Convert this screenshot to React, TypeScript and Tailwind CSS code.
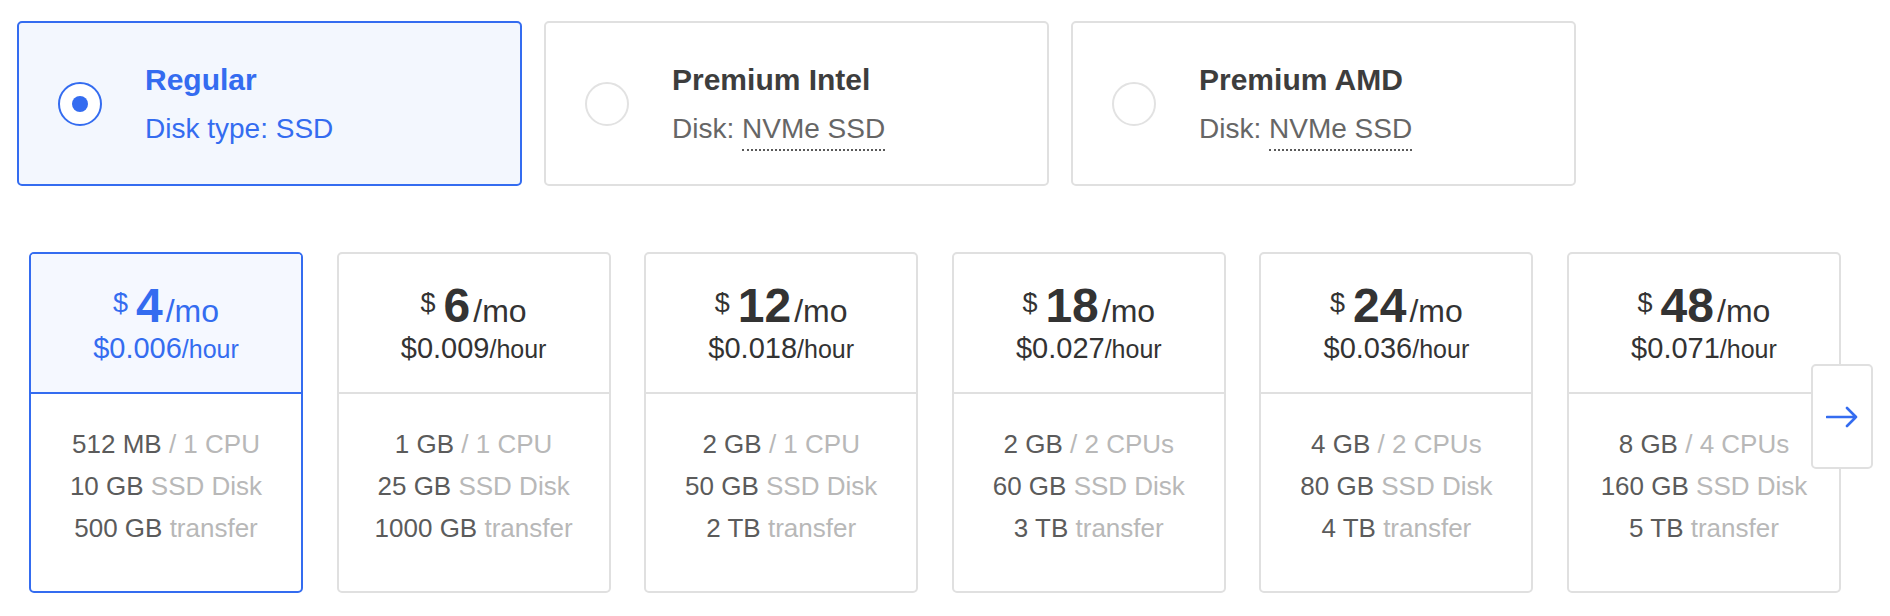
import React from 'react';

const cpuTypes = [
    { title: 'Regular', label: 'Disk type:', disk: 'SSD', selected: true },
    { title: 'Premium Intel', label: 'Disk:', disk: 'NVMe SSD', selected: false },
    { title: 'Premium AMD', label: 'Disk:', disk: 'NVMe SSD', selected: false },
];

const plans = [
    { price: '4', hour: '0.006', mem: '512 MB', cpu: '1 CPU', disk: '10 GB', transfer: '500 GB' },
    { price: '6', hour: '0.009', mem: '1 GB', cpu: '1 CPU', disk: '25 GB', transfer: '1000 GB' },
    { price: '12', hour: '0.018', mem: '2 GB', cpu: '1 CPU', disk: '50 GB', transfer: '2 TB' },
    { price: '18', hour: '0.027', mem: '2 GB', cpu: '2 CPUs', disk: '60 GB', transfer: '3 TB' },
    { price: '24', hour: '0.036', mem: '4 GB', cpu: '2 CPUs', disk: '80 GB', transfer: '4 TB' },
    { price: '48', hour: '0.071', mem: '8 GB', cpu: '4 CPUs', disk: '160 GB', transfer: '5 TB' },
];

const App: React.FC = () => (
    <div className="relative w-full h-[616px] bg-white font-['Liberation_Sans',Arial,sans-serif]">
        {/* CPU options */}
        <div className="flex gap-[22px] pt-[21px] pl-[17px]">
            {cpuTypes.map((t) => (
                <div
                    key={t.title}
                    className={
                        t.selected
                            ? 'w-[505px] h-[165px] rounded-[5px] border-2 border-[#346cf0] bg-[#f3f7fe] flex items-center pl-[39px]'
                            : 'w-[505px] h-[165px] rounded-[5px] border-2 border-[#e0e0e0] bg-white flex items-center pl-[39px]'
                    }
                >
                    {t.selected ? (
                        <div className="w-[44px] h-[44px] rounded-full border-2 border-[#346cf0] bg-white flex items-center justify-center shrink-0">
                            <div className="w-[16px] h-[16px] rounded-full bg-[#346cf0]" />
                        </div>
                    ) : (
                        <div className="w-[44px] h-[44px] rounded-full border-2 border-[#e2e2e2] bg-white shrink-0" />
                    )}
                    <div className="ml-[43px]">
                        <div className={t.selected ? 'text-[30px] font-bold leading-none text-[#346cf0]' : 'text-[30px] font-bold leading-none text-[#3d3d3d]'}>
                            {t.title}
                        </div>
                        <div className={t.selected ? 'mt-[20px] text-[28px] leading-none text-[#346cf0]' : 'mt-[20px] text-[28px] leading-none text-[#666666]'}>
                            {t.label}{' '}
                            {t.selected ? (
                                t.disk
                            ) : (
                                <span className="inline-block pb-[6px] -mb-[8px] border-b-2 border-dotted border-[#5a5a5a]">{t.disk}</span>
                            )}
                        </div>
                    </div>
                </div>
            ))}
        </div>

        {/* Plans */}
        <div className="flex gap-[33.6px] mt-[66px] pl-[29px]">
            {plans.map((p, i) => {
                const sel = i === 0;
                return (
                    <div
                        key={p.price}
                        className={
                            sel
                                ? 'w-[274px] h-[341px] rounded-[5px] border-2 border-[#346cf0] bg-white flex flex-col overflow-hidden'
                                : 'w-[274px] h-[341px] rounded-[5px] border-2 border-[#e0e0e0] bg-white flex flex-col overflow-hidden'
                        }
                    >
                        <div
                            className={
                                sel
                                    ? 'h-[140px] shrink-0 border-b-2 border-[#346cf0] bg-[#f5f8ff] pt-[28px] text-[#346cf0]'
                                    : 'h-[140px] shrink-0 border-b-2 border-[#e0e0e0] pt-[28px] text-[#333333]'
                            }
                        >
                            <div className="flex justify-center items-baseline h-[48px] leading-none">
                                <span className="self-start mt-[8px] text-[27px] leading-none mr-[8px]">$</span>
                                <span className="text-[48px] font-bold leading-none">{p.price}</span>
                                <span className="text-[32px] leading-none ml-[3px]">/mo</span>
                            </div>
                            <div className="mt-[4px] text-center leading-none">
                                <span className="text-[29px]">${p.hour}</span>
                                <span className="text-[25px]">/hour</span>
                            </div>
                        </div>
                        <div className="pt-[29px] text-center text-[26px] leading-[42px] text-[#5b5b5b]">
                            <div>
                                {p.mem} <span className="text-[#b8b8b8]">/ {p.cpu}</span>
                            </div>
                            <div>
                                {p.disk} <span className="text-[#b8b8b8]">SSD Disk</span>
                            </div>
                            <div>
                                {p.transfer} <span className="text-[#b8b8b8]">transfer</span>
                            </div>
                        </div>
                    </div>
                );
            })}
        </div>

        {/* next arrow */}
        <button className="absolute left-[1811px] top-[364px] w-[62px] h-[105px] rounded-[5px] border-2 border-[#e0e0e0] bg-white flex items-center justify-center">
            <svg width="32" height="22" viewBox="0 0 32 22" fill="none">
                <path d="M1 11h29M21 2l9 9-9 9" stroke="#346cf0" strokeWidth="2.6" strokeLinecap="round" strokeLinejoin="round" />
            </svg>
        </button>
    </div>
);

export default App;
